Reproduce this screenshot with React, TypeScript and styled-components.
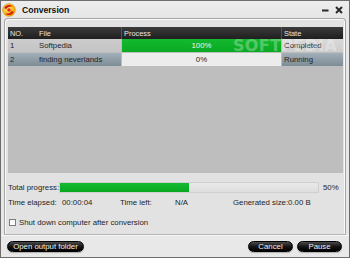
import React from "react";
import styled, { createGlobalStyle } from "styled-components";

const Global = createGlobalStyle`
  html, body { margin: 0; padding: 0; background: #e6e6e6; }
  * { box-sizing: border-box; }
  body { font-family: "Liberation Sans", Arial, sans-serif; font-size: 7.8px; color: #1e1e1e; }
`;

const Window = styled.div`
  width: 350px;
  height: 258px;
  border: 1px solid #6c6c6c;
  background: #e7e7e7;
  display: flex;
  flex-direction: column;
  position: relative;
  overflow: hidden;
`;

const TitleBar = styled.div`
  height: 17px;
  display: flex;
  align-items: center;
  padding: 0 6px 0 1px;
  background: linear-gradient(#ededed, #e6e6e6);
`;

const Title = styled.span`
  font-weight: bold;
  font-size: 8.6px;
  color: #111;
  margin-left: 6px;
  flex: 1;
`;

const Controls = styled.div`
  display: flex;
  align-items: center;
  gap: 6px;
`;

const Panel = styled.div`
  flex: 1;
  margin: 0 3px 0 3px;
  border: 1px solid #a6a6a6;
  border-bottom-color: #b5b5b5;
  border-radius: 4px 4px 0 0;
  box-shadow: inset 1px 1px 0 #fafafa, inset -1px 0 0 #fafafa;
  background: #e2e2e2;
  padding: 8px 2px 0 3px;
  display: flex;
  flex-direction: column;
`;

const TableArea = styled.div`
  height: 146px;
  background: #bebebe;
  position: relative;
  overflow: hidden;
`;

const Grid = styled.div`
  display: grid;
  grid-template-columns: 29px 84px 160px 1fr;
  grid-template-rows: 11px 13px 13px;
  row-gap: 1px;
`;

const HeadCell = styled.div<{ $sep?: boolean }>`
  margin-bottom: -1px;
  height: 12px;
  background: linear-gradient(#3b3b3b, #1f1f1f);
  color: #e6e6e6;
  display: flex;
  align-items: center;
  padding-left: 2px;
  font-size: 7.4px;
  border-left: ${(p) => (p.$sep ? "1px solid #555" : "none")};
`;

type Tone = "gray" | "light" | "blue" | "green" | "white";

const Cell = styled.div<{ $tone: Tone; $center?: boolean; $gap?: boolean }>`
  display: flex;
  align-items: center;
  justify-content: ${(p) => (p.$center ? "center" : "flex-start")};
  padding-left: ${(p) => (p.$center ? "0" : "2px")};
  margin-left: ${(p) => (p.$gap ? "1px" : "0")};
  color: ${(p) => (p.$tone === "green" ? "#f2f2f2" : "#1f1f1f")};
  background: ${(p) =>
    p.$tone === "gray"
      ? "linear-gradient(#cccccc, #c4c4c4)"
      : p.$tone === "light"
      ? "linear-gradient(#d9d9d9, #cdcdcd)"
      : p.$tone === "blue"
      ? "linear-gradient(#a2afb8, #7e8c96)"
      : p.$tone === "green"
      ? "linear-gradient(#13b92e, #0aa923)"
      : "#ececec"};
`;

const Watermark = styled.div`
  position: absolute;
  left: 225px;
  top: 11px;
  font-family: "DejaVu Sans", sans-serif;
  font-weight: bold;
  font-size: 16px;
  line-height: 1;
  letter-spacing: 0.3px;
  color: rgba(255, 255, 255, 0.3);
  pointer-events: none;
  white-space: nowrap;
`;

const Info = styled.div`
  display: flex;
  flex-direction: column;
  padding: 8px 0 0 0;
`;

const ProgressRow = styled.div`
  display: flex;
  align-items: center;
  height: 12px;
`;

const Label = styled.span<{ $w?: number }>`
  width: ${(p) => (p.$w ? `${p.$w}px` : "auto")};
  flex: none;
  white-space: nowrap;
`;

const Track = styled.div`
  width: 260px;
  height: 11px;
  background: linear-gradient(#e9e9e9, #dedede);
  border: 1px solid #cfcfcf;
  display: flex;
`;

const Fill = styled.div`
  height: 100%;
  background: linear-gradient(#14bb30, #09a722);
`;

const Pct = styled.span`
  margin-left: 4px;
`;

const TimeRow = styled.div`
  display: flex;
  align-items: center;
  height: 12px;
  margin-top: 3px;
`;

const CheckRow = styled.label`
  display: flex;
  align-items: center;
  height: 12px;
  margin-top: 8px;
  gap: 3px;
`;

const Box = styled.span`
  width: 7px;
  height: 7px;
  border: 1px solid #7c7c7c;
  background: linear-gradient(#f4f4f4, #fff);
  margin-left: 1px;
`;

const BottomBar = styled.div`
  height: 22px;
  display: flex;
  align-items: center;
  padding: 0 7px 0 6px;
  gap: 4px;
  border-top: 1px solid #f6f6f6;
  background: #e8e8e8;
`;

const Button = styled.button<{ $w: number }>`
  width: ${(p) => p.$w}px;
  height: 11px;
  border-radius: 6px;
  border: 1px solid #000;
  background: linear-gradient(#4a4a4a 0%, #151515 50%, #000 100%);
  color: #f0f0f0;
  font-family: "Liberation Sans", Arial, sans-serif;
  font-size: 7.8px;
  padding: 0;
  display: flex;
  align-items: center;
  justify-content: center;
  box-shadow: 0 1px 1px rgba(0, 0, 0, 0.25);
`;

const Spacer = styled.div`
  flex: 1;
`;

const Logo = () => (
  <svg width="14" height="14" viewBox="0 0 14 14">
    <defs>
      <radialGradient id="lg" cx="40%" cy="40%" r="60%">
        <stop offset="0" stopColor="#ffe870" />
        <stop offset="1" stopColor="#f5a800" />
      </radialGradient>
    </defs>
    <circle cx="7" cy="7" r="6.3" fill="url(#lg)" />
    <path d="M2.2 5 C3.5 1.8 8 1 10.8 3.6 C8.5 3 5.5 3.6 4.2 6.2 Z" fill="#d91d12" />
    <path d="M11.8 9 C10.5 12.2 6 13 3.2 10.4 C5.5 11 8.5 10.4 9.8 7.8 Z" fill="#d91d12" />
    <circle cx="7" cy="7" r="1.8" fill="#e0301a" />
    <circle cx="7" cy="7" r="6.3" fill="none" stroke="#c98a00" strokeWidth="0.6" />
  </svg>
);

const WinButtons = () => (
  <Controls>
    <svg width="7" height="7" viewBox="0 0 7 7">
      <rect x="0" y="3.5" width="6.5" height="2" fill="#2a2a2a" />
    </svg>
    <svg width="8" height="8" viewBox="0 0 8 8">
      <path d="M1 1 L7 7 M7 1 L1 7" stroke="#2a2a2a" strokeWidth="2" />
    </svg>
  </Controls>
);

export default function App() {
  return (
    <>
      <Global />
      <Window>
        <TitleBar>
          <Logo />
          <Title>Conversion</Title>
          <WinButtons />
        </TitleBar>
        <Panel>
          <TableArea>
            <Grid>
              <HeadCell>NO.</HeadCell>
              <HeadCell>File</HeadCell>
              <HeadCell $sep>Process</HeadCell>
              <HeadCell $sep>State</HeadCell>
              <Cell $tone="gray">1</Cell>
              <Cell $tone="gray">Softpedia</Cell>
              <Cell $tone="green" $center $gap>100%</Cell>
              <Cell $tone="light" $gap>Completed</Cell>
              <Cell $tone="blue">2</Cell>
              <Cell $tone="blue">finding neverlands</Cell>
              <Cell $tone="white" $center $gap>0%</Cell>
              <Cell $tone="blue" $gap>Running</Cell>
            </Grid>
            <Watermark>SOFTPEDIA</Watermark>
          </TableArea>
          <Info>
            <ProgressRow>
              <Label $w={51}>Total progress:</Label>
              <Track>
                <Fill style={{ width: "50%" }} />
              </Track>
              <Pct>50%</Pct>
            </ProgressRow>
            <TimeRow>
              <Label $w={54}>Time elapsed:</Label>
              <Label $w={58}>00:00:04</Label>
              <Label $w={55}>Time left:</Label>
              <Label $w={58}>N/A</Label>
              <Label>Generated size:0.00 B</Label>
            </TimeRow>
            <CheckRow>
              <Box />
              <span>Shut down computer after conversion</span>
            </CheckRow>
          </Info>
        </Panel>
        <BottomBar>
          <Button $w={77}>Open output folder</Button>
          <Spacer />
          <Button $w={45}>Cancel</Button>
          <Button $w={45}>Pause</Button>
        </BottomBar>
      </Window>
    </>
  );
}
